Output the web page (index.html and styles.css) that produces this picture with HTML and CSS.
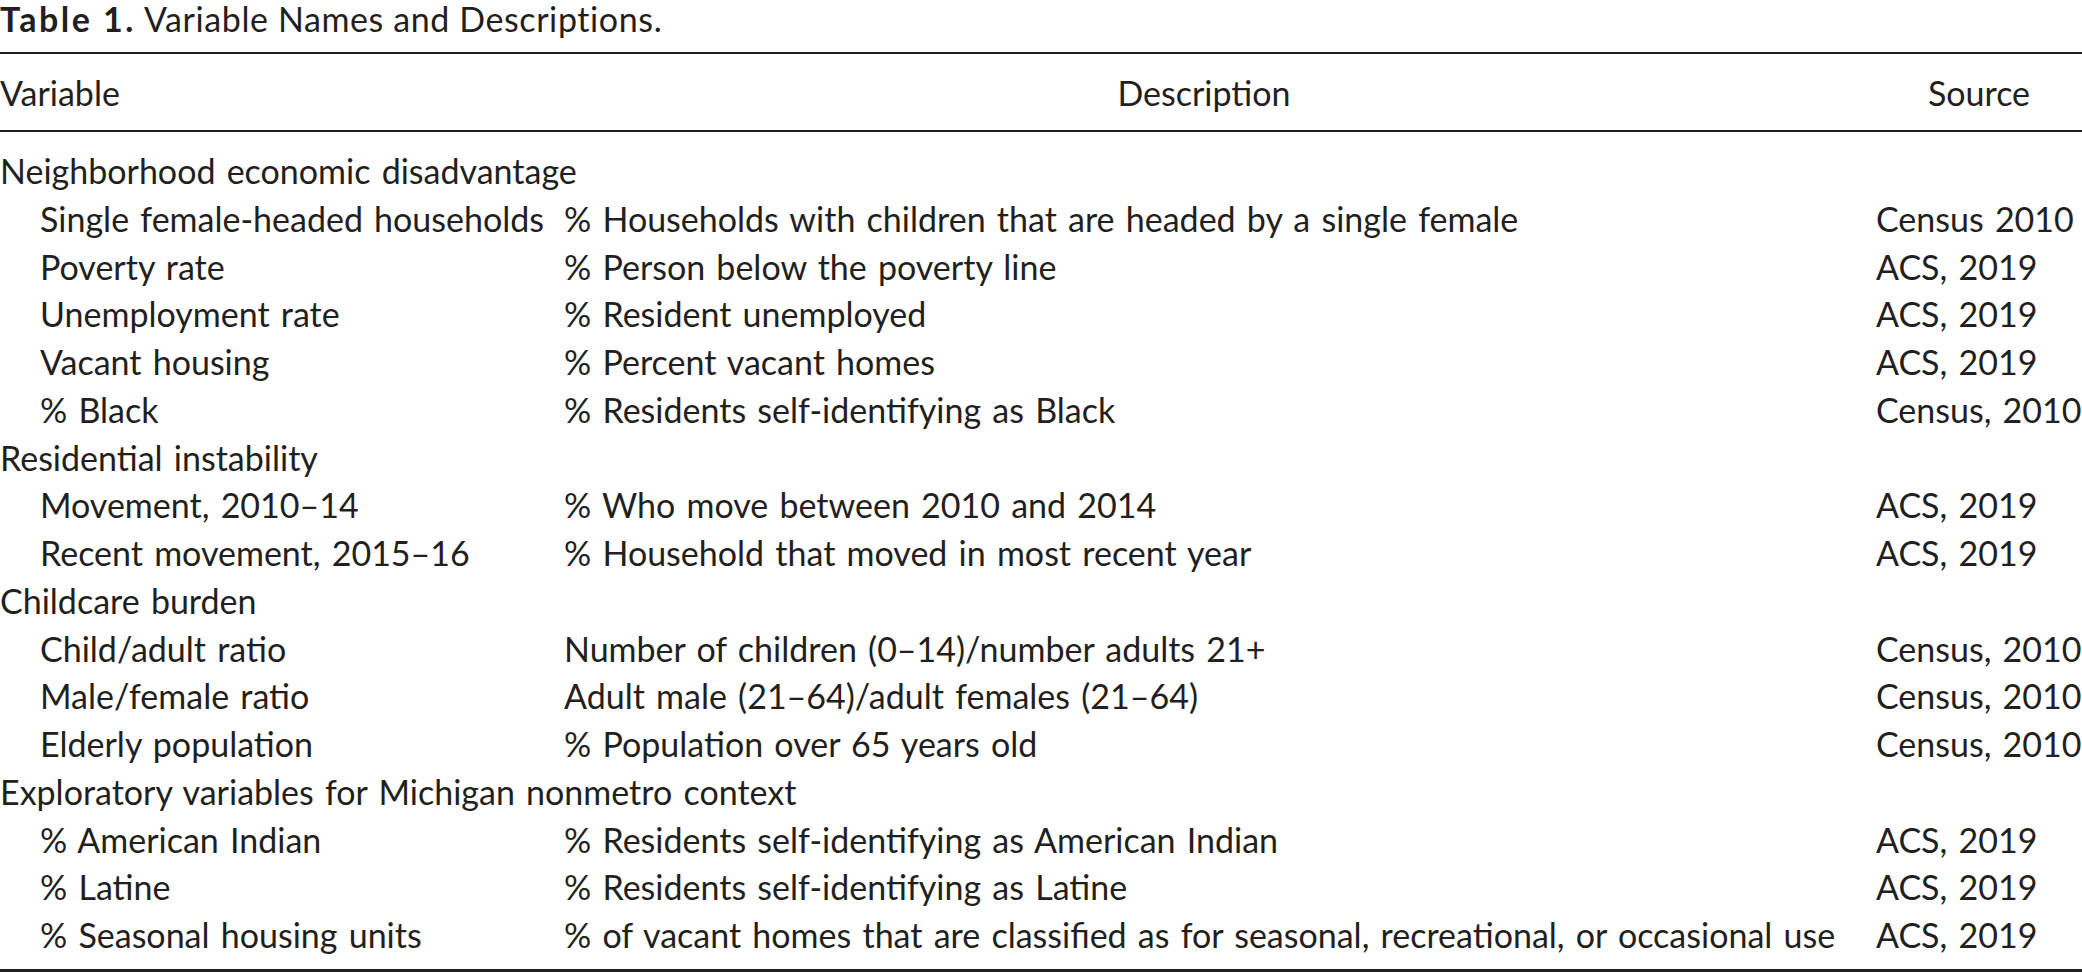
FILE: index.html
```html
<!DOCTYPE html>
<html lang="en">
<head>
<meta charset="utf-8">
<title>Table 1. Variable Names and Descriptions.</title>
<link rel="stylesheet" href="styles.css">
</head>
<body>
<div class="caption"><span class="label">Table 1.</span> Variable Names and Descriptions.</div>
<table class="vars">
  <colgroup>
    <col class="c-var">
    <col class="c-desc">
    <col class="c-src">
  </colgroup>
  <thead>
    <tr>
      <th class="h-var">Variable</th>
      <th class="h-desc">Description</th>
      <th class="h-src">Source</th>
    </tr>
  </thead>
  <tbody>
    <tr class="group"><td colspan="3">Neighborhood economic disadvantage</td></tr>
    <tr><td class="sub">Single female-headed households</td><td>% Households with children that are headed by a single female</td><td>Census 2010</td></tr>
    <tr><td class="sub">Poverty rate</td><td>% Person below the poverty line</td><td>ACS, 2019</td></tr>
    <tr><td class="sub">Unemployment rate</td><td>% Resident unemployed</td><td>ACS, 2019</td></tr>
    <tr><td class="sub">Vacant housing</td><td>% Percent vacant homes</td><td>ACS, 2019</td></tr>
    <tr><td class="sub">% Black</td><td>% Residents self-identifying as Black</td><td>Census, 2010</td></tr>
    <tr class="group"><td colspan="3">Residential instability</td></tr>
    <tr><td class="sub">Movement, 2010–14</td><td>% Who move between 2010 and 2014</td><td>ACS, 2019</td></tr>
    <tr><td class="sub">Recent movement, 2015–16</td><td>% Household that moved in most recent year</td><td>ACS, 2019</td></tr>
    <tr class="group"><td colspan="3">Childcare burden</td></tr>
    <tr><td class="sub">Child/adult ratio</td><td>Number of children (0–14)/number adults 21+</td><td>Census, 2010</td></tr>
    <tr><td class="sub">Male/female ratio</td><td>Adult male (21–64)/adult females (21–64)</td><td>Census, 2010</td></tr>
    <tr><td class="sub">Elderly population</td><td>% Population over 65 years old</td><td>Census, 2010</td></tr>
    <tr class="group"><td colspan="3">Exploratory variables for Michigan nonmetro context</td></tr>
    <tr><td class="sub">% American Indian</td><td>% Residents self-identifying as American Indian</td><td>ACS, 2019</td></tr>
    <tr><td class="sub">% Latine</td><td>% Residents self-identifying as Latine</td><td>ACS, 2019</td></tr>
    <tr><td class="sub">% Seasonal housing units</td><td>% of vacant homes that are classified as for seasonal, recreational, or occasional use</td><td>ACS, 2019</td></tr>
  </tbody>
</table>
</body>
</html>
```

FILE: styles.css
```css
html, body {
  margin: 0;
  padding: 0;
  background: #ffffff;
}

body {
  font-family: Lato, "Open Sans", "DejaVu Sans", sans-serif;
  font-size: 34px;
  color: #231f20;
}

.caption {
  height: 52px;
  line-height: 38px;
  white-space: nowrap;
  letter-spacing: 0.6px;
}

.caption .label {
  font-weight: 700;
  letter-spacing: 2.5px;
}

.vars {
  width: 100%;
  border-collapse: collapse;
  table-layout: fixed;
  border-top: 2px solid #231f20;
  border-bottom: 3px solid #231f20;
}

.c-var { width: 564px; }
.c-desc { width: 1312px; }
.c-src { width: auto; }

.vars th {
  font-weight: 400;
  height: 76px;
  padding: 0;
  border-bottom: 2px solid #231f20;
  white-space: nowrap;
}

.h-var { text-align: left; }
.h-desc { text-align: center; padding-right: 32px !important; }
.h-src { text-align: center; }

.vars td {
  padding: 0;
  height: 47.75px;
  line-height: 47.75px;
  white-space: nowrap;
  vertical-align: middle;
  word-spacing: 2.5px;
}

.vars td.sub {
  padding-left: 40px;
}

.vars tbody tr:first-child td {
  padding-top: 15px;
}

.vars tbody tr:last-child td {
  padding-bottom: 10px;
}
```
